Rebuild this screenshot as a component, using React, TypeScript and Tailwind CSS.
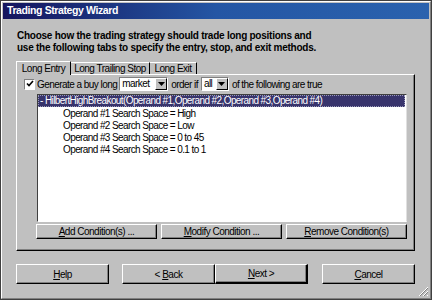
import React from "react";

const font = { fontFamily: '"Liberation Sans", Arial, sans-serif' };

function Btn({ children, className = "" }: { children: React.ReactNode; className?: string }) {
  return (
    <div
      className={
        "flex items-center justify-center bg-[#c0c0c0] border border-t-white border-l-white border-r-black border-b-black shadow-[inset_-1px_-1px_0_#808080] text-[10px] tracking-[-0.5px] text-black whitespace-nowrap " +
        className
      }
    >
      {children}
    </div>
  );
}

function Select({ value, className = "" }: { value: string; className?: string }) {
  return (
    <div className={"flex h-[14px] bg-white border border-t-[#808080] border-l-[#808080] border-r-white border-b-white " + className}>
      <div className="flex-1 pl-[2px] text-[10px] leading-[12px]">{value}</div>
      <div className="w-[12px] h-[12px] bg-[#c0c0c0] border border-t-white border-l-white border-r-black border-b-black flex items-center justify-center">
        <svg width="7" height="4" viewBox="0 0 7 4">
          <path d="M0 0h7L3.5 4z" fill="#000" />
        </svg>
      </div>
    </div>
  );
}

export default function App() {
  return (
    <div
      style={font}
      className="relative w-[432px] h-[300px] bg-[#c0c0c0] border border-[#404040] text-black overflow-hidden"
    >
      <div className="h-full w-full border border-t-white border-l-white border-r-[#808080] border-b-[#808080] flex flex-col">
        {/* title bar */}
        <div className="mx-[1px] mt-[1px] h-[16px] bg-gradient-to-r from-[#14145e] via-[#2456a4] to-[#2a62ae] flex items-center pl-[4px]">
          <span className="text-white font-bold text-[10.5px] tracking-[-0.4px]">Trading Strategy Wizard</span>
        </div>

        {/* heading */}
        <div className="pl-[15px] pt-[11px] font-bold text-[10px] leading-[12px] tracking-[-0.25px] whitespace-nowrap">
          <div>Choose how the trading strategy should trade long positions and</div>
          <div>use the following tabs to specify the entry, stop, and exit methods.</div>
        </div>

        {/* tabs */}
        <div className="ml-[14px] mt-[6px] flex items-end h-[14px] text-[10px] tracking-[-0.5px] whitespace-nowrap">
          <div className="relative z-10 h-[14px] w-[55px] bg-[#c0c0c0] border-t border-l border-white border-r border-r-black flex items-center justify-center -mb-[1px] pb-[1px]">
            Long Entry
          </div>
          <div className="h-[12px] w-[79px] border-t border-white border-r border-r-black flex items-center justify-center">
            Long Trailing Stop
          </div>
          <div className="h-[12px] w-[47px] border-t border-white border-r border-r-black flex items-center justify-center">
            Long Exit
          </div>
        </div>
        <div className="ml-[14px] w-[399px] h-[177px] border border-t-white border-l-white border-r-black border-b-black shadow-[inset_-1px_-1px_0_#808080] flex flex-col">
          {/* generate row */}
          <div className="flex items-center mt-[2px] ml-[7px] h-[14px] text-[10px] tracking-[-0.55px] whitespace-nowrap">
            <div className="w-[11px] h-[11px] bg-white border border-t-[#808080] border-l-[#808080] border-r-white border-b-white flex items-center justify-center">
              <svg width="8" height="8" viewBox="0 0 8 8">
                <path d="M1 3.5l2 2 4-4.5" stroke="#000" strokeWidth="1.6" fill="none" />
              </svg>
            </div>
            <span className="ml-[2px]">Generate a buy long</span>
            <Select value="market" className="ml-[2px] w-[49px]" />
            <span className="ml-[3px]">order if</span>
            <Select value="all" className="ml-[3px] w-[28px]" />
            <span className="ml-[3px]">of the following are true</span>
          </div>

          {/* list box */}
          <div className="ml-[20px] mt-[3px] w-[370px] h-[128px] bg-white border border-t-[#404040] border-l-[#404040] border-r-[#e0e0e0] border-b-white text-[10px] tracking-[-0.6px] leading-[12px] whitespace-nowrap">
            <div className="h-[12px] bg-[#38346c] text-white pl-[1px] mr-[1px] border border-dotted border-[#9a9ab8]">
              <span className="relative -top-[1px]">- HilbertHighBreakout(Operand #1,Operand #2,Operand #3,Operand #4)</span>
            </div>
            <div className="pl-[25px] pt-[1px] flex flex-col">
              <div>Operand #1 Search Space = High</div>
              <div>Operand #2 Search Space = Low</div>
              <div>Operand #3 Search Space = 0 to 45</div>
              <div>Operand #4 Search Space = 0.1 to 1</div>
            </div>
          </div>

          {/* condition buttons */}
          <div className="ml-[19px] mt-[2px] flex gap-[4px]">
            <Btn className="w-[121px] h-[15px]">
              <span><u>A</u>dd Condition(s) ...</span>
            </Btn>
            <Btn className="w-[121px] h-[15px]">
              <span><u>M</u>odify Condition ...</span>
            </Btn>
            <Btn className="w-[121px] h-[15px]">
              <span><u>R</u>emove Condition(s)</span>
            </Btn>
          </div>
        </div>

        {/* bottom buttons */}
        <div className="ml-[14px] mt-[13px] flex">
          <Btn className="w-[93px] h-[20px]">
            <span><u>H</u>elp</span>
          </Btn>
          <Btn className="ml-[13px] w-[93px] h-[20px]">
            <span>&lt; <u>B</u>ack</span>
          </Btn>
          <Btn className="w-[93px] h-[20px] border-r-2 border-b-2">
            <span><u>N</u>ext &gt;</span>
          </Btn>
          <Btn className="ml-[14px] w-[93px] h-[20px]">
            <span><u>C</u>ancel</span>
          </Btn>
        </div>
      </div>

      {/* resize grip */}
      <svg className="absolute right-[2px] bottom-[2px]" width="12" height="12" viewBox="0 0 12 12">
        <path d="M11 2L2 11M11 6L6 11M11 10L10 11" stroke="#fff" strokeWidth="1" />
        <path d="M11 3L3 11M11 7L7 11" stroke="#808080" strokeWidth="1" />
      </svg>
    </div>
  );
}
